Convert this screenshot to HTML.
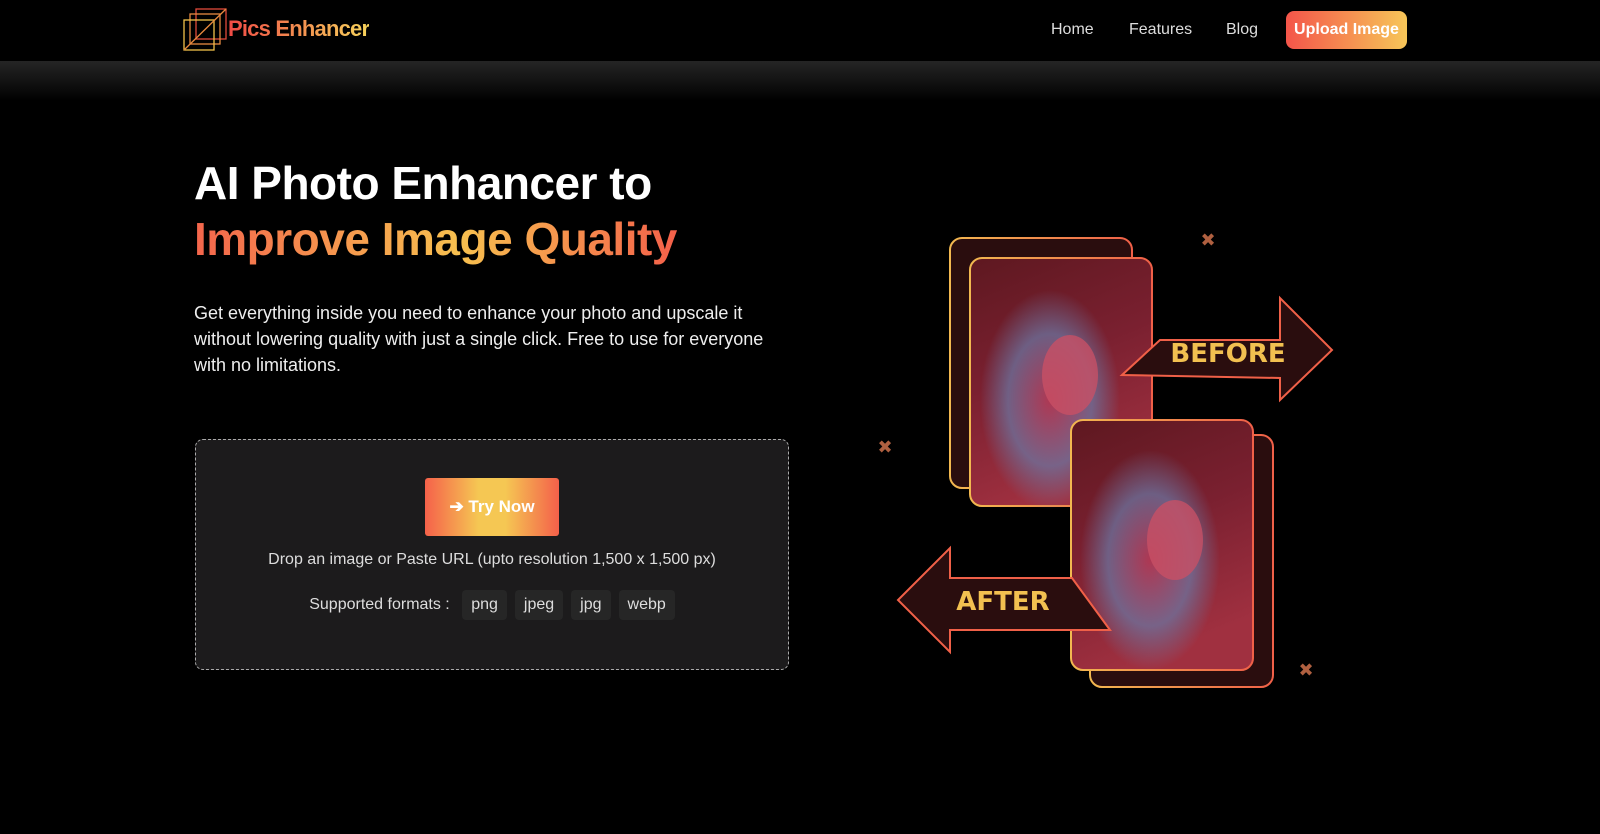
<!DOCTYPE html>
<html><head><meta charset="utf-8"><style>
*{margin:0;padding:0;box-sizing:border-box}
body{width:1600px;height:834px;background:#000;font-family:"Liberation Sans",sans-serif;color:#fff;overflow:hidden;position:relative}
.hdr{position:absolute;left:0;top:0;width:1600px;height:61px;background:#000}
.band{position:absolute;left:0;top:61px;width:1600px;height:40px;background:linear-gradient(#252525,#000)}
.logo{position:absolute;left:228px;top:16px;font-weight:bold;font-size:22px;letter-spacing:-0.8px;background:linear-gradient(90deg,#f04a45,#f7d35b);-webkit-background-clip:text;color:transparent}
.nav{position:absolute;top:21px;font-size:16px;color:#ddd}
.btn{position:absolute;left:1286px;top:11px;width:121px;height:38px;border-radius:8px;background:linear-gradient(90deg,#f4554a,#f7c658);font-size:16px;font-weight:bold;text-align:center;line-height:38px}
h1{position:absolute;left:194px;top:155px;font-size:46px;font-weight:bold;line-height:56px;letter-spacing:-0.5px}
.g{background:linear-gradient(90deg,#f4654c,#f7c04f 55%,#f4604a);-webkit-background-clip:text;color:transparent}
.p{position:absolute;left:194px;top:300px;width:600px;font-size:18px;line-height:26px;color:#eee}
.box{position:absolute;left:195px;top:439px;width:594px;height:231px;border:1px dashed #aaa;border-radius:8px;background:#1c1b1c}
.try{position:absolute;left:229px;top:38px;width:134px;height:58px;border-radius:3px;background:linear-gradient(90deg,#f5614a,#f5c753 40%,#f5c753 60%,#f4604a);font-weight:bold;font-size:17px;line-height:58px;text-align:center}
.drop{position:absolute;left:0;width:100%;top:111px;text-align:center;font-size:16px;color:#ddd}
.fmt{position:absolute;left:0;width:100%;top:150px;text-align:center;font-size:16px;color:#ddd}
.fmt span.t{display:inline-block;background:#262626;border-radius:4px;padding:0 9px;height:30px;line-height:30px;margin-left:8px}
</style></head><body>
<div class="hdr"></div><div class="band"></div>
<svg style="position:absolute;left:182px;top:8px" width="46" height="46" viewBox="0 0 46 46" fill="none" stroke-width="1.3">
<rect x="14" y="1" width="30" height="30" stroke="#e24a3a"/><rect x="8" y="6" width="30" height="30" stroke="#e88a40"/><rect x="2" y="12" width="30" height="30" stroke="#f2c24a"/><line x1="2" y1="42" x2="44" y2="1" stroke="#e8893e"/></svg>
<div class="logo">Pics Enhancer</div>
<div class="nav" style="left:1051px">Home</div>
<div class="nav" style="left:1129px">Features</div>
<div class="nav" style="left:1226px">Blog</div>
<div class="btn">Upload Image</div>
<h1>AI Photo Enhancer to<br><span class="g">Improve Image Quality</span></h1>
<div class="p">Get everything inside you need to enhance your photo and upscale it without lowering quality with just a single click. Free to use for everyone with no limitations.</div>
<div class="box">
<div class="try">➔ Try Now</div>
<div class="drop">Drop an image or Paste URL (upto resolution 1,500 x 1,500 px)</div>
<div class="fmt">Supported formats : <span class="t">png</span><span class="t">jpeg</span><span class="t">jpg</span><span class="t">webp</span></div>
</div>
<svg style="position:absolute;left:870px;top:220px" width="480" height="470" viewBox="870 220 480 470">
<defs>
<linearGradient id="ph" x1="0" y1="0" x2="0.3" y2="1"><stop offset="0" stop-color="#5e1820"/><stop offset="0.5" stop-color="#7a2030"/><stop offset="1" stop-color="#a03040"/></linearGradient>
<radialGradient id="hood" cx="0.5" cy="0.5" r="0.5"><stop offset="0" stop-color="#c04060"/><stop offset="0.6" stop-color="#6a7aa8"/><stop offset="1" stop-color="#6a7aa8" stop-opacity="0"/></radialGradient>
<linearGradient id="fr" x1="0" y1="0" x2="1" y2="0"><stop offset="0" stop-color="#f2b850"/><stop offset="1" stop-color="#f06048"/></linearGradient>
</defs>
<rect x="950" y="238" width="182" height="250" rx="12" fill="#2a0d0e" stroke="url(#fr)" stroke-width="2"/>
<rect x="970" y="258" width="182" height="248" rx="12" fill="url(#ph)" stroke="url(#fr)" stroke-width="2"/>
<ellipse cx="1050" cy="400" rx="70" ry="110" fill="url(#hood)" opacity="0.7"/>
<ellipse cx="1070" cy="375" rx="28" ry="40" fill="#c85065" opacity="0.8"/>
<path d="M1122 375 L1160 340 L1280 340 L1280 298 L1332 350 L1280 400 L1280 378 Z" fill="#2a0d0e" stroke="#f06048" stroke-width="2"/>
<text x="1228" y="362" font-family="DejaVu Sans,sans-serif" font-weight="bold" font-size="26" fill="#f2c050" text-anchor="middle">BEFORE</text>
<rect x="1090" y="435" width="183" height="252" rx="12" fill="#2a0d0e" stroke="url(#fr)" stroke-width="2"/>
<rect x="1071" y="420" width="182" height="250" rx="12" fill="url(#ph)" stroke="url(#fr)" stroke-width="2"/>
<ellipse cx="1150" cy="560" rx="70" ry="110" fill="url(#hood)" opacity="0.7"/>
<ellipse cx="1175" cy="540" rx="28" ry="40" fill="#c85065" opacity="0.8"/>
<path d="M1110 630 L1072 578 L950 578 L950 548 L898 600 L950 652 L950 630 Z" fill="#2a0d0e" stroke="#f06048" stroke-width="2"/>
<text x="1003" y="610" font-family="DejaVu Sans,sans-serif" font-weight="bold" font-size="26" fill="#f2c050" text-anchor="middle">AFTER</text>
<text x="1208" y="246" font-size="18" fill="#b06040" text-anchor="middle">✖</text>
<text x="885" y="453" font-size="18" fill="#b06040" text-anchor="middle">✖</text>
<text x="1306" y="676" font-size="18" fill="#b06040" text-anchor="middle">✖</text>
</svg>
</body></html>
